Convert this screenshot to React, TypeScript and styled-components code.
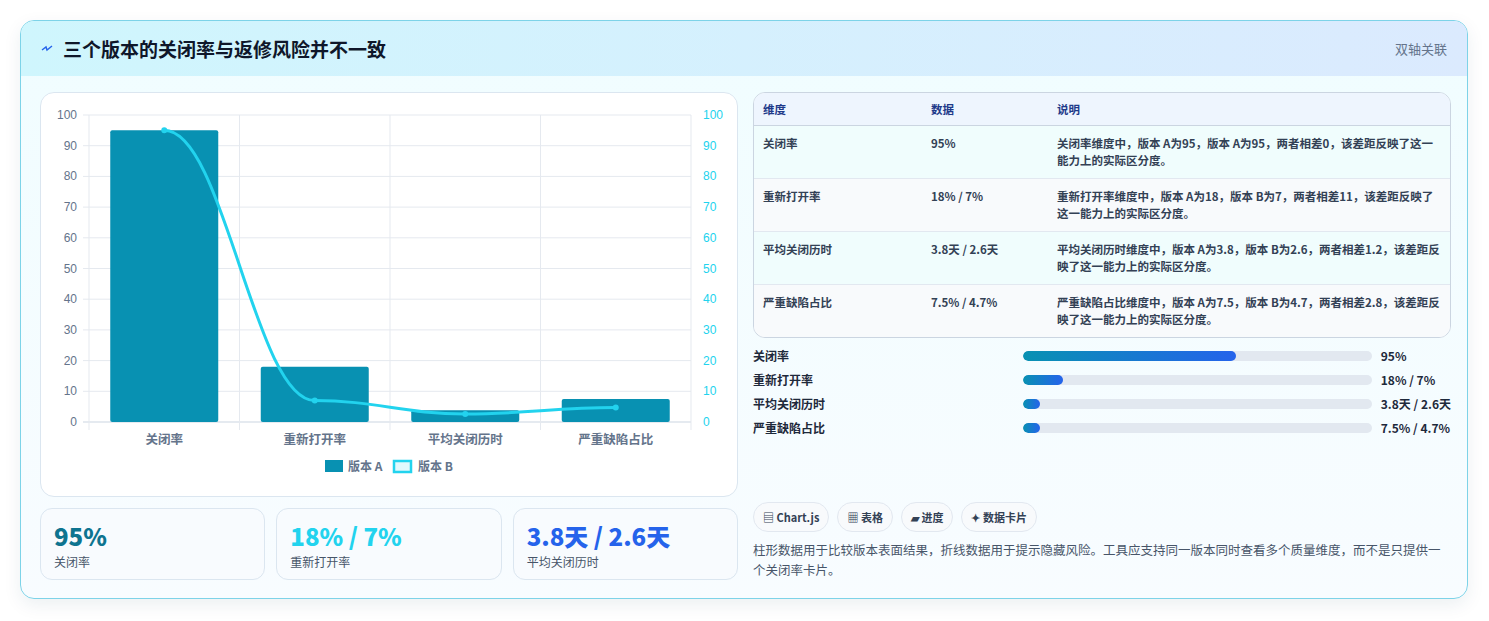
import React from 'react';
import styled, { createGlobalStyle } from 'styled-components';

const Global = createGlobalStyle`
  body { margin: 0; background: #f4f6f9; font-family: "Noto Sans CJK SC", "Noto Sans", sans-serif; }
`;

const Page = styled.div`
  background: #fff;
  padding: 20px 21px 22px 20px;
  height: 579px;
`;

const Card = styled.div`
  border: 1px solid #7dd3e8;
  border-radius: 14px;
  background: linear-gradient(180deg, #f0fdff 0%, #f8fcff 100%);
  box-shadow: 0 6px 18px rgba(15, 60, 90, 0.08);
  overflow: hidden;
`;

const Header = styled.div`
  height: 55px;
  display: flex;
  align-items: center;
  justify-content: space-between;
  padding: 0 20px;
  background: linear-gradient(90deg, #cff6fd 0%, #dbeafe 100%);
`;

const Title = styled.h1`
  margin: 0;
  font-size: 19px;
  font-weight: 700;
  color: #0f172a;
  display: flex;
  align-items: center;
  gap: 10px;
`;

const Tag = styled.span`
  font-size: 13px;
  color: #64748b;
`;

const Body = styled.div`
  display: grid;
  grid-template-columns: 698px 698px;
  gap: 15px;
  padding: 16px 18px 18px 19px;
`;

const Col = styled.div`
  display: flex;
  flex-direction: column;
  gap: 11px;
`;

const ChartBox = styled.div`
  height: 403px;
  background: #fff;
  border: 1px solid #dbe6f0;
  border-radius: 14px;
  position: relative;
`;

const Stats = styled.div`
  display: grid;
  grid-template-columns: repeat(3, 1fr);
  gap: 11px;
`;

const Stat = styled.div`
  height: 72px;
  box-sizing: border-box;
  border: 1px solid #dbe6f0;
  border-radius: 12px;
  background: #f8fbfe;
  padding: 12px 13px;
`;

const StatValue = styled.div<{ $c: string }>`
  font-size: 24px;
  font-weight: 800;
  color: ${p => p.$c};
  line-height: 30px;
`;

const StatLabel = styled.div`
  font-size: 12px;
  color: #475569;
  margin-top: 2px;
`;

const Table = styled.table`
  width: 100%;
  border-collapse: separate;
  border-spacing: 0;
  border: 1px solid #cbd5e1;
  border-radius: 12px;
  overflow: hidden;
  font-size: 11.5px;
  font-weight: 600;
  background: #fff;
  th {
    text-align: left;
    color: #1e3a8a;
    background: #eef5fe;
    height: 32px;
    padding: 0 9px;
    font-weight: 600;
    border-bottom: 1px solid #cbd5e1;
  }
  td {
    color: #334155;
    padding: 9px 9px;
    vertical-align: top;
    line-height: 17px;
    height: 34px;
  }
  tr:nth-child(odd) td { background: #f0fdfd; }
  tr:nth-child(even) td { background: #f8fafc; }
  tr + tr td { border-top: 1px solid #e2e8f0; }
`;

const Bars = styled.div`
  display: grid;
  grid-template-columns: 261px 1fr auto;
  column-gap: 9px;
  row-gap: 7px;
  align-items: center;
  font-size: 12px;
  font-weight: 600;
  color: #1e293b;
  margin-top: 1px;
`;

const Track = styled.div`
  height: 10px;
  border-radius: 5px;
  background: #e2e8f0;
  overflow: hidden;
`;

const Fill = styled.div`
  height: 100%;
  border-radius: 5px;
  background: linear-gradient(90deg, #0891b2, #2563eb);
`;

const Chips = styled.div`
  display: flex;
  gap: 8px;
  margin-top: 58px;
`;

const Chip = styled.span`
  border: 1px solid #e2e8f0;
  background: #f8fafc;
  border-radius: 15px;
  padding: 6px 9px;
  font-size: 11px;
  font-weight: 600;
  color: #334155;
`;

const Note = styled.p`
  margin: 0;
  font-size: 12.5px;
  line-height: 20px;
  color: #475569;
`;

const rows = [
  ['关闭率', '95%', '关闭率维度中，版本 A为95，版本 A为95，两者相差0，该差距反映了这一能力上的实际区分度。'],
  ['重新打开率', '18% / 7%', '重新打开率维度中，版本 A为18，版本 B为7，两者相差11，该差距反映了这一能力上的实际区分度。'],
  ['平均关闭历时', '3.8天 / 2.6天', '平均关闭历时维度中，版本 A为3.8，版本 B为2.6，两者相差1.2，该差距反映了这一能力上的实际区分度。'],
  ['严重缺陷占比', '7.5% / 4.7%', '严重缺陷占比维度中，版本 A为7.5，版本 B为4.7，两者相差2.8，该差距反映了这一能力上的实际区分度。'],
];

const bars: [string, number, string][] = [
  ['关闭率', 61, '95%'],
  ['重新打开率', 11.5, '18% / 7%'],
  ['平均关闭历时', 5, '3.8天 / 2.6天'],
  ['严重缺陷占比', 5, '7.5% / 4.7%'],
];

const cats = ['关闭率', '重新打开率', '平均关闭历时', '严重缺陷占比'];
const A = [95, 18, 3.8, 7.5];
const B = [95, 7, 2.6, 4.7];

function Chart() {
  // coords relative to chart box (box origin = 40,93 on page)
  const x0 = 48, x1 = 650, yb = 329, yt = 22;
  const y = (v: number) => yb - (v / 100) * (yb - yt);
  const step = (x1 - x0) / 4;
  const cx = (i: number) => x0 + step * (i + 0.5);
  const pts = B.map((v, i) => [cx(i), y(v)]);
  let d = `M${pts[0][0]},${pts[0][1]}`;
  for (let i = 1; i < pts.length; i++) {
    const [ax, ay] = pts[i - 1], [bx, by] = pts[i];
    const k = (bx - ax) * 0.4;
    d += ` C${ax + k},${ay} ${bx - k},${by} ${bx},${by}`;
  }
  const ticks = [0, 10, 20, 30, 40, 50, 60, 70, 80, 90, 100];
  return (
    <svg width="698" height="403" style={{ display: 'block' }} fontFamily="Liberation Sans, sans-serif">
      {ticks.map(t => (
        <g key={t}>
          <line x1={x0 - 6} x2={x1} y1={y(t)} y2={y(t)} stroke={t === 0 ? '#cbd5e1' : '#e5e9ef'} />
          <text x={36} y={y(t) + 4} fontSize="12" fill="#64748b" textAnchor="end">{t}</text>
          <text x={662} y={y(t) + 4} fontSize="12" fill="#22d3ee">{t}</text>
        </g>
      ))}
      {[0, 1, 2, 3, 4].map(i => (
        <line key={i} x1={x0 + step * i} x2={x0 + step * i} y1={yt} y2={yb + 8} stroke="#e5e9ef" />
      ))}
      {A.map((v, i) => (
        <rect key={i} x={cx(i) - 54} y={y(v)} width={108} height={yb - y(v)} rx={2} fill="#0891b2" />
      ))}
      <path d={d} fill="none" stroke="#22d3ee" strokeWidth="3" />
      {pts.map((p, i) => <circle key={i} cx={p[0]} cy={p[1]} r="3" fill="#22d3ee" />)}
      {cats.map((c, i) => (
        <text key={c} x={cx(i)} y={351} fontSize="12.5" fill="#64748b" textAnchor="middle" fontFamily="Noto Sans CJK SC, sans-serif" fontWeight="600">{c}</text>
      ))}
      <rect x={284} y={367} width={18} height={12} fill="#0891b2" />
      <text x={307} y={378} fontSize="12" fill="#64748b" fontFamily="Noto Sans CJK SC, sans-serif" fontWeight="600">版本 A</text>
      <rect x={353} y={368} width={17} height={11} fill="#e0f9fd" stroke="#22d3ee" strokeWidth="2.5" />
      <text x={377} y={378} fontSize="12" fill="#64748b" fontFamily="Noto Sans CJK SC, sans-serif" fontWeight="600">版本 B</text>
    </svg>
  );
}

export default function App() {
  return (
    <Page>
      <Global />
      <Card>
        <Header>
          <Title>
            <svg width="12" height="10" viewBox="0 0 12 10"><path d="M1 6 L5 3 L6 6 L11 2" stroke="#2563eb" strokeWidth="1.4" fill="none" /></svg>
            三个版本的关闭率与返修风险并不一致
          </Title>
          <Tag>双轴关联</Tag>
        </Header>
        <Body>
          <Col>
            <ChartBox><Chart /></ChartBox>
            <Stats>
              <Stat><StatValue $c="#0e7490">95%</StatValue><StatLabel>关闭率</StatLabel></Stat>
              <Stat><StatValue $c="#22d3ee">18% / 7%</StatValue><StatLabel>重新打开率</StatLabel></Stat>
              <Stat><StatValue $c="#2563eb">3.8天 / 2.6天</StatValue><StatLabel>平均关闭历时</StatLabel></Stat>
            </Stats>
          </Col>
          <Col style={{ gap: 8 }}>
            <Table>
              <thead><tr><th style={{ width: 150 }}>维度</th><th style={{ width: 108 }}>数据</th><th>说明</th></tr></thead>
              <tbody>
                {rows.map(r => (
                  <tr key={r[0]}><td>{r[0]}</td><td>{r[1]}</td><td>{r[2]}</td></tr>
                ))}
              </tbody>
            </Table>
            <Bars>
              {bars.map(([l, w, v]) => (
                <React.Fragment key={l}>
                  <span>{l}</span>
                  <Track><Fill style={{ width: `${w}%` }} /></Track>
                  <span>{v}</span>
                </React.Fragment>
              ))}
            </Bars>
            <Chips>
              <Chip>▤ Chart.js</Chip>
              <Chip>▦ 表格</Chip>
              <Chip>▰ 进度</Chip>
              <Chip>✦ 数据卡片</Chip>
            </Chips>
            <Note>柱形数据用于比较版本表面结果，折线数据用于提示隐藏风险。工具应支持同一版本同时查看多个质量维度，而不是只提供一个关闭率卡片。</Note>
          </Col>
        </Body>
      </Card>
    </Page>
  );
}
